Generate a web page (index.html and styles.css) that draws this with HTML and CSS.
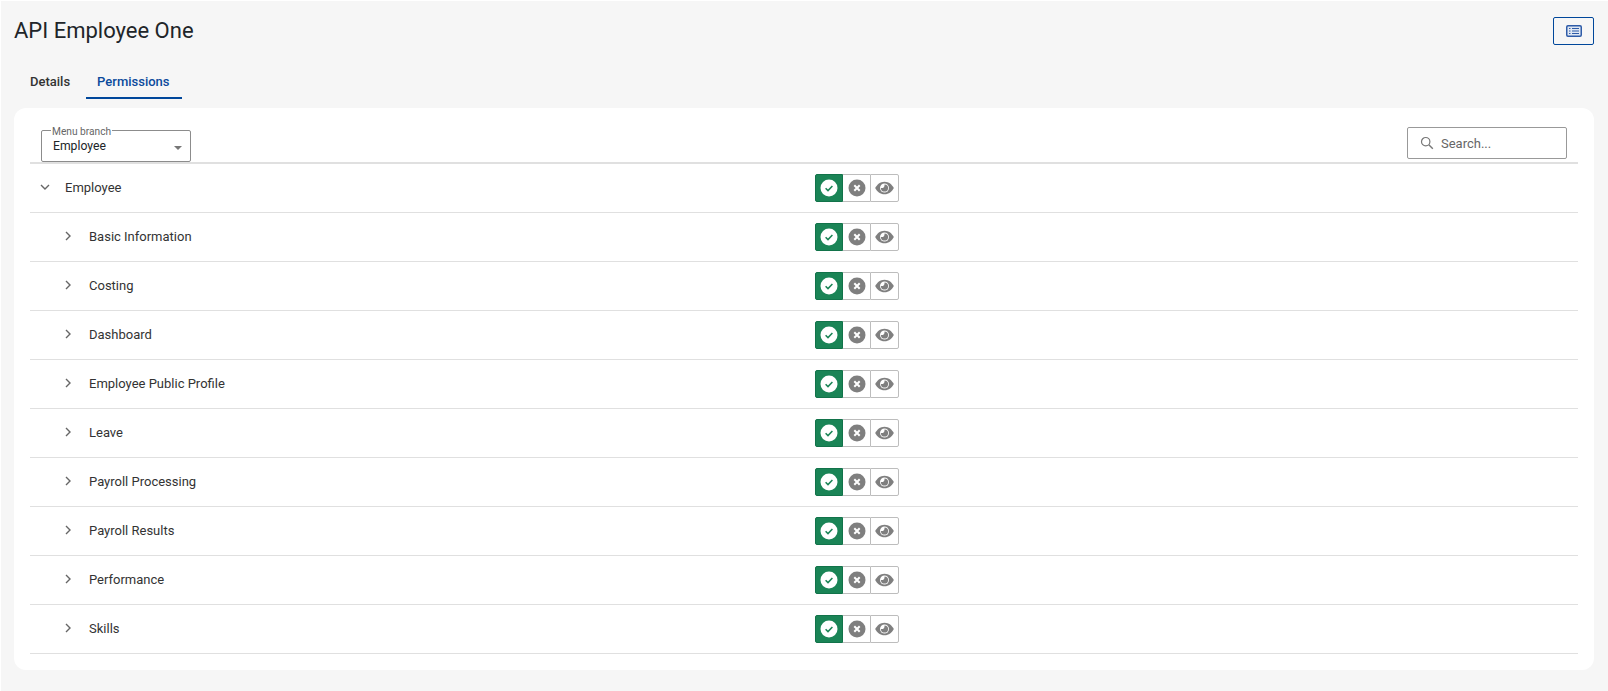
FILE: index.html
```html
<!DOCTYPE html>
<html lang="en">
<head>
<meta charset="utf-8">
<title>API Employee One</title>
<link rel="stylesheet" href="styles.css">
</head>
<body>
<svg class="defs" width="0" height="0" aria-hidden="true">
  <symbol id="ok" viewBox="0 0 18 18"><circle cx="9" cy="9" r="8.5" fill="#fff"/><path d="M5.6 9.2l2.4 2.4 4.4-4.6" fill="none" stroke="#1a8456" stroke-width="1.5"/></symbol>
  <symbol id="no" viewBox="0 0 18 18"><circle cx="9" cy="9" r="8.5" fill="#7f7f7f"/><path d="M6.3 6.3l5.4 5.4M11.7 6.3l-5.4 5.4" fill="none" stroke="#fff" stroke-width="2"/></symbol>
  <symbol id="eye" viewBox="0 0 20 14"><path d="M10 .3C5.500.3 2 3.300.2 7c1.800 3.700 5.300 6.700 9.800 6.700s8-3 9.800-6.700C18 3.300 14.500.3 10 .3z" fill="#7f7f7f"/><circle cx="10" cy="7" r="4.700" fill="#fff"/><path d="M10 3.200a3.800 3.800 0 1 1-3.800 3.800c2.200.6 4.300-1.300 3.800-3.800z" fill="#7f7f7f"/></symbol>
  <symbol id="right" viewBox="0 0 10 12"><path d="M3 2l4 4-4 4" fill="none" stroke="#666" stroke-width="1.400"/></symbol>
  <symbol id="down" viewBox="0 0 12 10"><path d="M2 3l4 4 4-4" fill="none" stroke="#666" stroke-width="1.400"/></symbol>
</svg>
<main class="page">
  <header class="head">
    <h1 class="title">API Employee One</h1>
    <button class="view-btn" aria-label="List view">
      <svg width="16" height="12" viewBox="0 0 16 12"><rect x=".75" y=".75" width="14.500" height="10.500" rx="1.200" fill="#dfe7f3" stroke="#2f5ca8" stroke-width="1.500"/><path d="M3 3.500h1.500M6 3.500h7M3 6h1.500M6 6h7M3 8.500h1.500M6 8.500h7" stroke="#2f5ca8" stroke-width="1"/></svg>
    </button>
  </header>
  <nav class="tabs">
    <a class="tab">Details</a>
    <a class="tab tab-active">Permissions</a>
  </nav>
  <section class="card">
    <div class="toolbar">
      <fieldset class="select">
        <legend class="select-label">Menu branch</legend>
        <span class="select-value">Employee</span>
        <span class="caret"></span>
      </fieldset>
      <label class="search">
        <svg width="14" height="14" viewBox="0 0 14 14"><circle cx="5.700" cy="5.700" r="4.200" fill="none" stroke="#777" stroke-width="1.200"/><path d="M8.800 8.800l4 4" stroke="#777" stroke-width="1.400"/></svg>
        <span class="search-text">Search...</span>
      </label>
    </div>
    <div class="tree">
      <div class="row">
        <svg class="chev-down" width="12" height="10"><use href="#down"/></svg>
        <span class="name">Employee</span>
        <div class="toggle"><span class="seg seg-on"><svg width="18" height="18"><use href="#ok"/></svg></span><span class="seg seg-mid"><svg width="18" height="18"><use href="#no"/></svg></span><span class="seg seg-end"><svg class="eye" width="20" height="14"><use href="#eye"/></svg></span></div>
      </div>
      <div class="row row-child">
        <svg class="chev" width="10" height="12"><use href="#right"/></svg>
        <span class="name">Basic Information</span>
        <div class="toggle"><span class="seg seg-on"><svg width="18" height="18"><use href="#ok"/></svg></span><span class="seg seg-mid"><svg width="18" height="18"><use href="#no"/></svg></span><span class="seg seg-end"><svg class="eye" width="20" height="14"><use href="#eye"/></svg></span></div>
      </div>
      <div class="row row-child">
        <svg class="chev" width="10" height="12"><use href="#right"/></svg>
        <span class="name">Costing</span>
        <div class="toggle"><span class="seg seg-on"><svg width="18" height="18"><use href="#ok"/></svg></span><span class="seg seg-mid"><svg width="18" height="18"><use href="#no"/></svg></span><span class="seg seg-end"><svg class="eye" width="20" height="14"><use href="#eye"/></svg></span></div>
      </div>
      <div class="row row-child">
        <svg class="chev" width="10" height="12"><use href="#right"/></svg>
        <span class="name">Dashboard</span>
        <div class="toggle"><span class="seg seg-on"><svg width="18" height="18"><use href="#ok"/></svg></span><span class="seg seg-mid"><svg width="18" height="18"><use href="#no"/></svg></span><span class="seg seg-end"><svg class="eye" width="20" height="14"><use href="#eye"/></svg></span></div>
      </div>
      <div class="row row-child">
        <svg class="chev" width="10" height="12"><use href="#right"/></svg>
        <span class="name">Employee Public Profile</span>
        <div class="toggle"><span class="seg seg-on"><svg width="18" height="18"><use href="#ok"/></svg></span><span class="seg seg-mid"><svg width="18" height="18"><use href="#no"/></svg></span><span class="seg seg-end"><svg class="eye" width="20" height="14"><use href="#eye"/></svg></span></div>
      </div>
      <div class="row row-child">
        <svg class="chev" width="10" height="12"><use href="#right"/></svg>
        <span class="name">Leave</span>
        <div class="toggle"><span class="seg seg-on"><svg width="18" height="18"><use href="#ok"/></svg></span><span class="seg seg-mid"><svg width="18" height="18"><use href="#no"/></svg></span><span class="seg seg-end"><svg class="eye" width="20" height="14"><use href="#eye"/></svg></span></div>
      </div>
      <div class="row row-child">
        <svg class="chev" width="10" height="12"><use href="#right"/></svg>
        <span class="name">Payroll Processing</span>
        <div class="toggle"><span class="seg seg-on"><svg width="18" height="18"><use href="#ok"/></svg></span><span class="seg seg-mid"><svg width="18" height="18"><use href="#no"/></svg></span><span class="seg seg-end"><svg class="eye" width="20" height="14"><use href="#eye"/></svg></span></div>
      </div>
      <div class="row row-child">
        <svg class="chev" width="10" height="12"><use href="#right"/></svg>
        <span class="name">Payroll Results</span>
        <div class="toggle"><span class="seg seg-on"><svg width="18" height="18"><use href="#ok"/></svg></span><span class="seg seg-mid"><svg width="18" height="18"><use href="#no"/></svg></span><span class="seg seg-end"><svg class="eye" width="20" height="14"><use href="#eye"/></svg></span></div>
      </div>
      <div class="row row-child">
        <svg class="chev" width="10" height="12"><use href="#right"/></svg>
        <span class="name">Performance</span>
        <div class="toggle"><span class="seg seg-on"><svg width="18" height="18"><use href="#ok"/></svg></span><span class="seg seg-mid"><svg width="18" height="18"><use href="#no"/></svg></span><span class="seg seg-end"><svg class="eye" width="20" height="14"><use href="#eye"/></svg></span></div>
      </div>
      <div class="row row-child">
        <svg class="chev" width="10" height="12"><use href="#right"/></svg>
        <span class="name">Skills</span>
        <div class="toggle"><span class="seg seg-on"><svg width="18" height="18"><use href="#ok"/></svg></span><span class="seg seg-mid"><svg width="18" height="18"><use href="#no"/></svg></span><span class="seg seg-end"><svg class="eye" width="20" height="14"><use href="#eye"/></svg></span></div>
      </div>
    </div>
  </section>
</main>
</body>
</html>
```
FILE: styles.css
```css
* { box-sizing: border-box; }
html, body { margin: 0; height: 100%; background: #fff; }
body { padding: 1px 0 0 1px; font-family: Roboto, "Liberation Sans", sans-serif; color: #212529; overflow: hidden; }
.defs { position: absolute; }
.page { height: 690px; background: #f6f6f6; padding: 0 14px 0 13px; }
.head { display: flex; justify-content: space-between; align-items: flex-start; height: 59px; padding-top: 16px; }
.title { margin: 0; font-size: 22px; font-weight: 400; line-height: 28px; color: #212529; }
.view-btn { display: flex; align-items: center; justify-content: center; width: 41px; height: 28px; padding: 0; background: transparent; border: 1px solid #00479b; border-radius: 2px; }
.tabs { display: flex; height: 39px; padding-left: 4px; }
.tab { padding: 0 12px; margin-right: 3px; font-size: 13px; font-weight: 500; line-height: 44px; color: #333; }
.tab-active { margin-left: 1px; padding-left: 11px; color: #0b4a9c; border-bottom: 2px solid #00479b; height: 39px; }
.card { background: #fff; border-radius: 12px; height: 562px; margin-top: 9px; padding: 0 16px; }
.toolbar { display: flex; justify-content: space-between; align-items: flex-start; height: 56px; border-bottom: 2px solid #e0e0e0; }
.select { position: relative; display: block; margin: 15px 0 0 11px; padding: 0 11px; width: 150px; height: 39px; border: 1px solid #8c8c8c; border-radius: 2px; }
.select-label { padding: 4px 1px 0; margin-left: -2px; font-size: 10.200px; line-height: 10px; color: #666; height: 14px; }
.select-value { display: block; font-size: 12.200px; line-height: 16px; color: #212529; margin-top: 1px; }
.caret { position: absolute; right: 8px; top: 9px; width: 0; height: 0; border-left: 4px solid transparent; border-right: 4px solid transparent; border-top: 4px solid #777; }
.search { display: flex; align-items: center; gap: 7px; margin: 19px 11px 0 0; padding-left: 12px; width: 160px; height: 32px; border: 1px solid #999; border-radius: 2px; }
.search-text { font-size: 13px; color: #666; }
.row { display: flex; align-items: center; height: 49px; padding-left: 9px; border-bottom: 1px solid #e0e0e0; }
.chev-down { flex: none; margin-right: 14px; margin-bottom: 2px; }
.chev { flex: none; margin-left: 24px; margin-right: 16px; margin-bottom: 2px; }
.name { font-size: 13px; color: #333; width: 750px; flex: none; padding-bottom: 2px; }
.row-child .name { width: 726px; }
.toggle { display: flex; width: 84px; height: 28px; }
.seg { display: flex; align-items: center; justify-content: center; height: 100%; background: #fff; border: 1px solid #bdbdbd; }
.seg-on { width: 28px; background: #1a8456; border-color: #12734a; border-radius: 2px 0 0 2px; }
.seg-mid { width: 27px; border-left: 0; border-right: 0; }
.seg-end { width: 29px; border-radius: 0 2px 2px 0; }
.seg svg { display: block; }
.seg .eye { width: 19px; height: 14px; }
```
